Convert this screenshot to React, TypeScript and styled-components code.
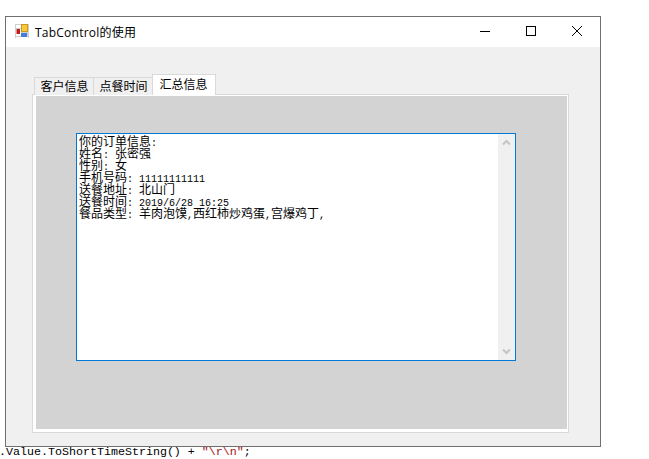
import styled, { createGlobalStyle } from "styled-components";
import { ReactNode } from "react";

const Global = createGlobalStyle`
	html, body {
		margin: 0;
		padding: 0;
		background: #fff;
		overflow: hidden;
	}
`

const Page = styled.div`
	width: 649px;
	height: 459px;
	padding: 16px 0 0 5px;
	box-sizing: border-box;
	overflow: hidden;
`

const Window = styled.div`
	width: 596px;
	height: 431px;
	box-sizing: border-box;
	border: 1px solid #6f6f6f;
	background: #f0f0f0;
	display: flex;
	flex-direction: column;
`

const TitleBar = styled.div`
	height: 30px;
	flex: none;
	background: #fff;
	display: flex;
	align-items: center;
	padding-left: 9px;
`

const AppIcon = styled.svg`
	width: 14px;
	height: 14px;
	flex: none;
	margin-bottom: 2px;
`

const Title = styled.div`
	margin: 0 0 1px 6px;
	font: 12px "Open Sans", "Noto Sans CJK SC", sans-serif;
	letter-spacing: 0.23px;
	color: #000;
	flex: 1;
`

const CaptionButton = styled.div`
	width: 46px;
	height: 30px;
	box-sizing: border-box;
	padding-bottom: 2px;
	display: flex;
	align-items: center;
	justify-content: center;
`

const Tabs = styled.div`
	margin: 27px 0 0 26px;
	display: flex;
	flex-direction: column;
	align-items: flex-start;
`

const TabStrip = styled.div`
	height: 21px;
	padding-left: 2px;
	display: flex;
	align-items: flex-end;
	position: relative;
	z-index: 1;
	margin-bottom: -1px;
`

const Tab = styled.div<{ $active?: boolean }>`
	box-sizing: border-box;
	height: ${(p) => (p.$active ? "21px" : "18px")};
	width: ${(p) => (p.$active ? "64px" : "60px")};
	margin-right: ${(p) => (p.$active ? "0" : "-1px")};
	padding: ${(p) => (p.$active ? "0 1px 0 0" : "0 0 0 1px")};
	border: 1px solid #d9d9d9;
	border-bottom: none;
	background: ${(p) => (p.$active ? "#fff" : "#f0f0f0")};
	font: 12px "Noto Sans CJK SC", sans-serif;
	line-height: ${(p) => (p.$active ? "18px" : "16px")};
	text-align: center;
	color: #000;
`

const TabPage = styled.div`
	width: 537px;
	height: 339px;
	box-sizing: border-box;
	border: 1px solid #d9d9d9;
	padding: 1px 1px 3px 3px;
	background: #fff;
`

const PageBody = styled.div`
	height: 100%;
	background: #d3d3d3;
	padding: 37px 0 0 40px;
	box-sizing: border-box;
`

const TextBox = styled.div`
	width: 440px;
	height: 228px;
	box-sizing: border-box;
	border: 1px solid #0078d7;
	background: #fff;
	display: flex;
`

const Lines = styled.div`
	flex: 1;
	padding: 1px 0 0 2px;
	font: 12px/12px "Noto Sans CJK SC", sans-serif;
	color: #000;
`

const Line = styled.div`
	height: 12px;
	white-space: nowrap;
`

const Half = styled.span`
	font: 10px/12px "Liberation Mono", monospace;
`

const ScrollBar = styled.div`
	width: 17px;
	flex: none;
	background: #f0f0f0;
	display: flex;
	flex-direction: column;
	justify-content: space-between;
	align-items: center;
	padding: 5px 0;
	box-sizing: border-box;
`

const Arrow = styled.svg`
	width: 9px;
	height: 7px;
`

const CodeLine = styled.div`
	margin: -1px 0 0 -6px;
	height: 13px;
	white-space: pre;
	font: 11.67px/13px "Liberation Mono", monospace;
	color: #000;
`

const CodeString = styled.span`
	color: #a31515;
`

const Row = ({ label, children }: { label: string; children?: ReactNode }) => (
	<Line>
		{label}
		<Half>: </Half>
		{children}
	</Line>
)

const App = () => {
	return (
		<Page>
			<Global />
			<Window>
				<TitleBar>
					<AppIcon viewBox="0 0 14 14">
						<rect x="0" y="0" width="14" height="14" fill="#cfcfcf" />
						<rect x="1" y="1" width="5" height="3" fill="#fff" />
						<rect x="1" y="5" width="5" height="7" fill="#fff" />
						<rect x="1.5" y="5" width="3.5" height="5" fill="#c0201a" />
						<rect x="6" y="0" width="7" height="8" fill="#c89a20" />
						<rect x="7" y="1" width="5" height="6" fill="#f8c838" />
						<rect x="6" y="9" width="6" height="4" fill="#3f7fd8" />
						<rect x="1" y="13" width="12" height="1" fill="#fff" />
					</AppIcon>
					<Title>TabControl的使用</Title>
					<CaptionButton>
						<svg width="10" height="10" viewBox="0 0 10 10">
							<path d="M0 5.5H10" stroke="#000" strokeWidth="1" />
						</svg>
					</CaptionButton>
					<CaptionButton>
						<svg width="10" height="10" viewBox="0 0 10 10">
							<rect x="0.5" y="0.5" width="9" height="9" fill="none" stroke="#000" />
						</svg>
					</CaptionButton>
					<CaptionButton>
						<svg width="10" height="10" viewBox="0 0 10 10">
							<path d="M0 0L10 10M10 0L0 10" stroke="#000" strokeWidth="1" />
						</svg>
					</CaptionButton>
				</TitleBar>
				<Tabs>
					<TabStrip>
						<Tab>客户信息</Tab>
						<Tab>点餐时间</Tab>
						<Tab $active>汇总信息</Tab>
					</TabStrip>
					<TabPage>
						<PageBody>
							<TextBox>
								<Lines>
									<Line>你的订单信息<Half>:</Half></Line>
									<Row label="姓名">张密强</Row>
									<Row label="性别">女</Row>
									<Row label="手机号码"><Half>11111111111</Half></Row>
									<Row label="送餐地址">北山门</Row>
									<Row label="送餐时间"><Half>2019/6/28 16:25</Half></Row>
									<Row label="餐品类型">羊肉泡馍<Half>,</Half>西红柿炒鸡蛋<Half>,</Half>宫爆鸡丁<Half>,</Half></Row>
								</Lines>
								<ScrollBar>
									<Arrow viewBox="0 0 9 7">
										<path d="M1 5.5L4.5 2L8 5.5" fill="none" stroke="#c4c4c4" strokeWidth="2" />
									</Arrow>
									<Arrow viewBox="0 0 9 7">
										<path d="M1 1.5L4.5 5L8 1.5" fill="none" stroke="#c4c4c4" strokeWidth="2" />
									</Arrow>
								</ScrollBar>
							</TextBox>
						</PageBody>
					</TabPage>
				</Tabs>
			</Window>
			<CodeLine>
				.Value.ToShortTimeString() + <CodeString>"\r\n"</CodeString>;
			</CodeLine>
		</Page>
	);
}

export default App;
